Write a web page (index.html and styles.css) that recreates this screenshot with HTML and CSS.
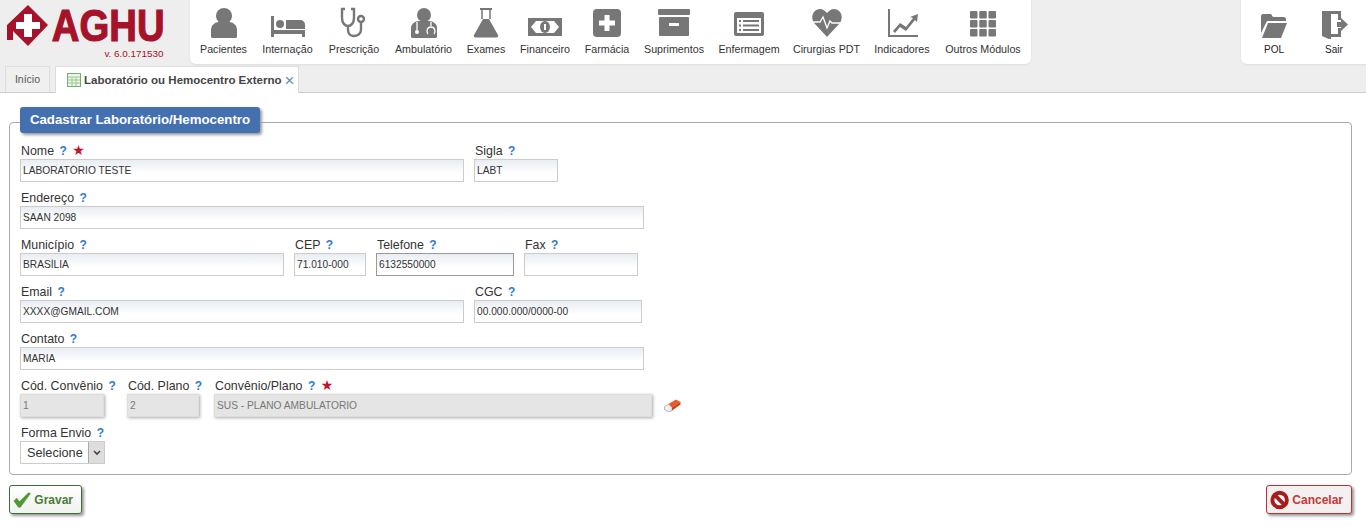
FILE: index.html
```html
<!DOCTYPE html>
<html lang="pt-BR">
<head>
  <meta charset="UTF-8">
  <title>AGHU – Laboratório ou Hemocentro Externo</title>
  <link rel="stylesheet" href="styles.css">
</head>
<body>

  <header class="topo">
    <div class="logo">
      <svg class="logo-cruz" viewBox="0 0 42 42" width="42" height="42">
        <path fill="#a5122a" d="M21 0 41 20 21 41 6 26v9H0V20z"/>
        <path fill="#fff" d="M17 9h8v8h8v7h-8v8h-8v-8H9v-7h8z"/>
      </svg>
      <div class="logo-texto">
        <span class="logo-nome">AGHU</span>
        <span class="logo-versao">v. 6.0.171530</span>
      </div>
    </div>

    <nav class="menu">
      <a class="menu-item">
        <svg class="icone" viewBox="0 0 40 32"><circle cx="20" cy="9" r="8"/><path d="M7 30v-7c0-5 4-8 8-8h10c4 0 8 3 8 8v7c0 .5-1 1-2 1H9c-1 0-2-.5-2-1z"/></svg>
        Pacientes
      </a>
      <a class="menu-item">
        <svg class="icone" viewBox="0 0 40 32"><path d="M3 9h3v14h31v7h-3v-3H6v3H3z"/><circle cx="12" cy="17" r="4"/><path d="M18 13h14c3 0 5 2 5 5v4H18z"/></svg>
        Internação
      </a>
      <a class="menu-item">
        <svg class="icone" viewBox="0 0 40 32"><path class="traco" d="M11 2H8v9c0 5 3 8 6 8s6-3 6-8V2h-3M14 19v4c0 4 3 6 6 6s7-2 7-6v-7"/><circle class="traco" cx="27" cy="12" r="3"/></svg>
        Prescrição
      </a>
      <a class="menu-item">
        <svg class="icone" viewBox="0 0 40 32"><circle cx="20" cy="8" r="7"/><path d="M7 30v-9c0-4 4-7 8-7h10c4 0 8 3 8 7v9c0 .5-1 1-2 1H9c-1 0-2-.5-2-1z"/><path class="traco-branco" d="M13 15v8M27 15v4M24 27c-2-2-1-7 3-7s5 5 3 7"/><circle class="branco" cx="13" cy="25" r="2"/></svg>
        Ambulatório
      </a>
      <a class="menu-item">
        <svg class="icone" viewBox="0 0 40 32"><path d="M14 1h12v2h-12zM17 12h6l9 16c.7 1.500 0 2.500-2 2.500H10c-2 0-2.700-1-2-2.500z"/><path class="traco-fino" d="M16 3v9M24 3v9"/></svg>
        Exames
      </a>
      <a class="menu-item">
        <svg class="icone" viewBox="0 0 40 32"><rect x="3" y="11" width="34" height="18"/><path class="branco" d="M6 20l5-6h18l5 6-5 6H11z"/><ellipse cx="20" cy="20" rx="5" ry="6"/><rect class="branco" x="19" y="17" width="2" height="6"/></svg>
        Financeiro
      </a>
      <a class="menu-item">
        <svg class="icone" viewBox="0 0 40 32"><rect x="6" y="2" width="28" height="28" rx="4"/><path class="branco" d="M17.500 8h5v5.500H28v5h-5.500V24h-5v-5.500H12v-5h5.500z"/></svg>
        Farmácia
      </a>
      <a class="menu-item">
        <svg class="icone" viewBox="0 0 40 32"><rect x="4" y="2" width="32" height="6" rx="1"/><rect x="5" y="10" width="30" height="19" rx="1"/><rect class="branco" x="15" y="16" width="10" height="3"/></svg>
        Suprimentos
      </a>
      <a class="menu-item">
        <svg class="icone" viewBox="0 0 40 32"><rect x="5" y="5" width="30" height="24" rx="2"/><rect class="branco" x="8" y="11" width="24" height="15"/><path d="M10 13h2v2h-2zM14 13h16v2H14zM10 17.500h2v2h-2zM14 17.500h16v2H14zM10 22h2v2h-2zM14 22h16v2H14z"/></svg>
        Enfermagem
      </a>
      <a class="menu-item">
        <svg class="icone" viewBox="0 0 40 32"><path d="M20 30 8 17C3 12 5 2 13 2c3 0 5 2 7 4 2-2 4-4 7-4 8 0 10 10 5 15z"/><path class="traco-branco" d="M5 15h8l3-5 4 11 3-7 2 2h10"/></svg>
        Cirurgias PDT
      </a>
      <a class="menu-item">
        <svg class="icone" viewBox="0 0 40 32"><path d="M6 2h2v26h28v2H6z"/><path d="M11 24l7-8 6 4 7-9-3-1 8-3-1 8-2-2-9 11-6-4-5 6z"/></svg>
        Indicadores
      </a>
      <a class="menu-item">
        <svg class="icone" viewBox="0 0 40 32"><rect x="7" y="4" width="7.500" height="7.500" rx="1"/><rect x="16.250" y="4" width="7.500" height="7.500" rx="1"/><rect x="25.500" y="4" width="7.500" height="7.500" rx="1"/><rect x="7" y="13" width="7.500" height="7.500" rx="1"/><rect x="16.250" y="13" width="7.500" height="7.500" rx="1"/><rect x="25.500" y="13" width="7.500" height="7.500" rx="1"/><rect x="7" y="22" width="7.500" height="7.500" rx="1"/><rect x="16.250" y="22" width="7.500" height="7.500" rx="1"/><rect x="25.500" y="22" width="7.500" height="7.500" rx="1"/></svg>
        Outros Módulos
      </a>
    </nav>

    <nav class="menu menu-direita">
      <a class="menu-item">
        <svg class="icone" viewBox="0 0 40 32"><path d="M7 9c0-1 1-2 2-2h8l2 3h11c1 0 2 1 2 2v2H13L7 26z"/><path d="M14 16h19l-6 15H8z"/></svg>
        POL
      </a>
      <a class="menu-item">
        <svg class="icone" viewBox="0 0 40 32"><path d="M8 4h19v9h-3V7h-7v20h7v-6h3v9H17v3L8 29z"/><path d="M23 15h4v-4l7 6.500-7 6.500v-4h-4z"/></svg>
        Sair
      </a>
    </nav>
  </header>

  <div class="abas">
    <a class="aba">Início</a>
    <a class="aba aba-ativa">
      <svg class="aba-icone" viewBox="0 0 14 14" width="14" height="14"><rect x=".5" y=".5" width="13" height="13" fill="#eef6e6" stroke="#6fb06f"/><path d="M1 4h12M1 7h12M1 10h12M5 4v9M9 4v9" stroke="#9cc79c" fill="none"/></svg>
      Laboratório ou Hemocentro Externo
      <span class="aba-fechar">×</span>
    </a>
  </div>

  <main class="conteudo">
    <form class="painel">
      <h2 class="painel-titulo">Cadastrar Laboratório/Hemocentro</h2>

      <div class="linha">
        <div class="campo w-444">
          <label>Nome <span class="ajuda">?</span> <span class="obrigatorio">★</span></label>
          <input type="text" value="LABORATÓRIO TESTE">
        </div>
        <div class="campo w-84">
          <label>Sigla <span class="ajuda">?</span></label>
          <input type="text" value="LABT">
        </div>
      </div>

      <div class="linha">
        <div class="campo w-624">
          <label>Endereço <span class="ajuda">?</span></label>
          <input type="text" value="SAAN 2098">
        </div>
      </div>

      <div class="linha">
        <div class="campo w-264">
          <label>Município <span class="ajuda">?</span></label>
          <input type="text" value="BRASÍLIA">
        </div>
        <div class="campo w-72">
          <label>CEP <span class="ajuda">?</span></label>
          <input type="text" value="71.010-000">
        </div>
        <div class="campo w-138">
          <label>Telefone <span class="ajuda">?</span></label>
          <input class="focado" type="text" value="6132550000">
        </div>
        <div class="campo w-114">
          <label>Fax <span class="ajuda">?</span></label>
          <input type="text" value="">
        </div>
      </div>

      <div class="linha">
        <div class="campo w-444">
          <label>Email <span class="ajuda">?</span></label>
          <input type="text" value="XXXX@GMAIL.COM">
        </div>
        <div class="campo w-168">
          <label>CGC <span class="ajuda">?</span></label>
          <input type="text" value="00.000.000/0000-00">
        </div>
      </div>

      <div class="linha">
        <div class="campo w-624">
          <label>Contato <span class="ajuda">?</span></label>
          <input type="text" value="MARIA">
        </div>
      </div>

      <div class="linha linha-convenio">
        <div class="campo w-84">
          <label>Cód. Convênio <span class="ajuda">?</span></label>
          <input type="text" value="1" disabled>
        </div>
        <div class="campo w-72">
          <label>Cód. Plano <span class="ajuda">?</span></label>
          <input type="text" value="2" disabled>
        </div>
        <div class="campo w-438">
          <label>Convênio/Plano <span class="ajuda">?</span> <span class="obrigatorio">★</span></label>
          <input type="text" value="SUS - PLANO AMBULATORIO" disabled>
        </div>
        <svg class="borracha" viewBox="0 0 17 13" width="17" height="13">
          <path fill="#eee" stroke="#999" stroke-width=".6" d="M.5 7.500 5 5l3 3.500V12l-4 .5-3.500-2z"/>
          <path fill="#ea5a2a" d="M4.500 5 12 .5 16.500 3 8 8.500z"/>
          <path fill="#c23f18" d="M8 8.500 16.500 3v2.500L8 11.500z"/>
        </svg>
      </div>

      <div class="linha">
        <div class="campo w-85">
          <label>Forma Envio <span class="ajuda">?</span></label>
          <div class="seletor">
            <select>
              <option>Selecione</option>
            </select>
            <span class="seletor-seta">
              <svg viewBox="0 0 8 6" width="8" height="6"><path d="M1 1l3 3 3-3" fill="none" stroke="#444" stroke-width="1.600"/></svg>
            </span>
          </div>
        </div>
      </div>
    </form>

    <div class="acoes">
      <button class="botao botao-gravar" type="button">
        <svg viewBox="0 0 20 18" width="20" height="18"><path fill="#4f9a2c" stroke="#3c7a20" stroke-width=".5" d="M1 10l3-3 3 4L17 1l2 1L8 17H6z"/></svg>
        Gravar
      </button>
      <button class="botao botao-cancelar" type="button">
        <svg viewBox="0 0 20 20" width="20" height="20"><circle cx="10" cy="10" r="7.500" fill="#fff" stroke="#a81c1c" stroke-width="4"/><path d="M4.500 4.500l11 11" stroke="#a81c1c" stroke-width="4"/></svg>
        Cancelar
      </button>
    </div>
  </main>

</body>
</html>
```

FILE: styles.css
```css
* { box-sizing: border-box; }
html, body { height: 100%; overflow: hidden; }
body { margin: 0; background: #fff; font-family: "Liberation Sans", Arial, sans-serif; color: #333; }

/* topo */
.topo { display: flex; height: 65px; background: #eee; }
.logo { display: flex; width: 190px; padding: 5px 0 0 7px; }
.logo-cruz { flex: none; }
.logo-texto { display: flex; flex-direction: column; align-items: flex-end; width: 114px; margin-left: 2px; }
.logo-nome { height: 43px; font-size: 44px; line-height: 42px; font-weight: bold; color: #a5122a; -webkit-text-stroke: 1.2px #a5122a; transform: scaleX(.87); transform-origin: right center; }
.logo-versao { margin-right: 1.500px; font-size: 9.900px; color: #a5122a; }

.menu { display: flex; gap: 15px; height: 64px; padding: 0 10px; background: #fff; border-radius: 0 0 6px 6px; box-shadow: 0 1px 2px #ddd; }
.menu-direita { gap: 0; width: 125px; margin-left: auto; padding: 0 0 0 3px; border-radius: 0 0 0 6px; }
.menu-item { display: flex; flex-direction: column; align-items: center; padding-top: 7px; font-size: 10.7px; line-height: 14px; color: #333; white-space: nowrap; }
.menu-item:nth-child(1) { width: 47px; }
.menu-item:nth-child(2) { width: 51px; }
.menu-item:nth-child(3) { width: 52px; }
.menu-item:nth-child(4) { width: 57px; }
.menu-item:nth-child(5) { width: 38px; }
.menu-item:nth-child(6) { width: 50px; }
.menu-item:nth-child(7) { width: 44px; }
.menu-item:nth-child(8) { width: 60px; }
.menu-item:nth-child(9) { width: 60px; }
.menu-item:nth-child(10) { width: 65px; }
.menu-item:nth-child(11) { width: 56px; }
.menu-item:nth-child(12) { width: 76px; }
.menu-direita .menu-item { width: 60px; font-size: 10px; line-height: 16px; color: #222; }
.icone { flex: none; width: 40px; height: 32px; margin-bottom: 3px; fill: #777; }
.icone .branco { fill: #fff; }
.icone .traco { fill: none; stroke: #777; stroke-width: 2.4; }
.icone .traco-fino { fill: none; stroke: #777; stroke-width: 1.5; }
.icone .traco-branco { fill: none; stroke: #fff; stroke-width: 1.3; }

/* abas */
.abas { display: flex; align-items: flex-end; gap: 5px; height: 28px; padding-left: 5px; background: #eee; border-bottom: 1px solid #ccc; }
.aba { width: 45px; height: 26px; font-size: 10.5px; line-height: 25px; text-align: center; color: #555; background: #f0f0f0; border: 1px solid #ddd; border-bottom: 0; }
.aba-ativa { display: flex; align-items: center; gap: 3px; width: 244px; height: 27px; padding: 0 0 0 11px; margin-bottom: -1px; font-size: 11.500px; font-weight: bold; color: #444; background: #fff; white-space: nowrap; }
.aba-icone { flex: none; }
.aba-fechar { font-size: 17px; font-weight: normal; color: #5f8fb5; }

/* formulario */
.conteudo { padding: 29px 14px 0 9px; }
.painel { height: 353px; padding: 0 10px; border: 1px solid #aaa; border-radius: 4px; }
.painel-titulo { width: 240px; height: 26px; margin: -16px 0 9px; font-size: 13.250px; line-height: 25px; font-weight: bold; text-align: center; color: #fff; background: #4470b0; border-radius: 3px; box-shadow: 2px 2px 3px #999; }

.linha { display: flex; gap: 10px; margin-bottom: 7px; }
.campo label { display: block; height: 17px; padding-left: 1px; font-size: 12.400px; line-height: 18px; color: #333; white-space: nowrap; }
.campo input { display: block; width: 100%; height: 23px; padding: 0 2px; font-family: "Liberation Sans", Arial, sans-serif; font-size: 10.200px; color: #333; background: linear-gradient(#e8edf3, #fff 65%); border: 1px solid #ccc; outline: none; }
.campo input.focado { border-color: #999; }
.campo input:disabled { color: #777; background: #e5e5e5; border-color: #ddd; box-shadow: 1px 1px 3px #aaa; }
.ajuda { margin-left: 2px; font-size: 12px; font-weight: bold; color: #2f7ad0; }
.obrigatorio { margin-left: 2px; font-family: "DejaVu Sans", sans-serif; font-size: 14px; line-height: 14px; color: #c8102e; }

.w-72 { width: 72px; }
.w-84 { width: 84px; }
.w-85 { width: 85px; }
.w-114 { width: 114px; }
.w-138 { width: 138px; }
.w-168 { width: 168px; }
.w-264 { width: 264px; }
.w-438 { width: 438px; }
.w-444 { width: 444px; }
.w-624 { width: 624px; }

.linha-convenio { align-items: flex-end; gap: 15px; }
.linha-convenio .campo:first-child { margin-right: 8px; }
.borracha { flex: none; margin: 0 0 5px -3px; }

.seletor { position: relative; height: 23px; }
.seletor select { width: 100%; height: 23px; padding: 0 0 0 6px; font-family: "Liberation Sans", Arial, sans-serif; font-size: 12.700px; color: #333; background: #fff; border: 1px solid #ccc; border-radius: 0; appearance: none; }
.seletor-seta { position: absolute; top: 1px; right: 1px; display: flex; align-items: center; justify-content: center; width: 16px; height: 21px; background: #ddd; border-left: 1px solid #aaa; pointer-events: none; }

/* botoes */
.acoes { display: flex; justify-content: space-between; margin-top: 10px; }
.botao { display: flex; align-items: center; gap: 3px; height: 29px; padding: 0 8px 0 3px; font-family: "Liberation Sans", Arial, sans-serif; font-size: 12px; font-weight: bold; border-radius: 3px; box-shadow: 2px 2px 3px #999; cursor: pointer; }
.botao-gravar { width: 73px; color: #4a7a3a; background: linear-gradient(#fff, #f0f2ee); border: 1px solid #3e6b3a; }
.botao-cancelar { width: 86px; color: #bf3a3a; background: #f4f0f0; border: 1px solid #b83232; }
```
